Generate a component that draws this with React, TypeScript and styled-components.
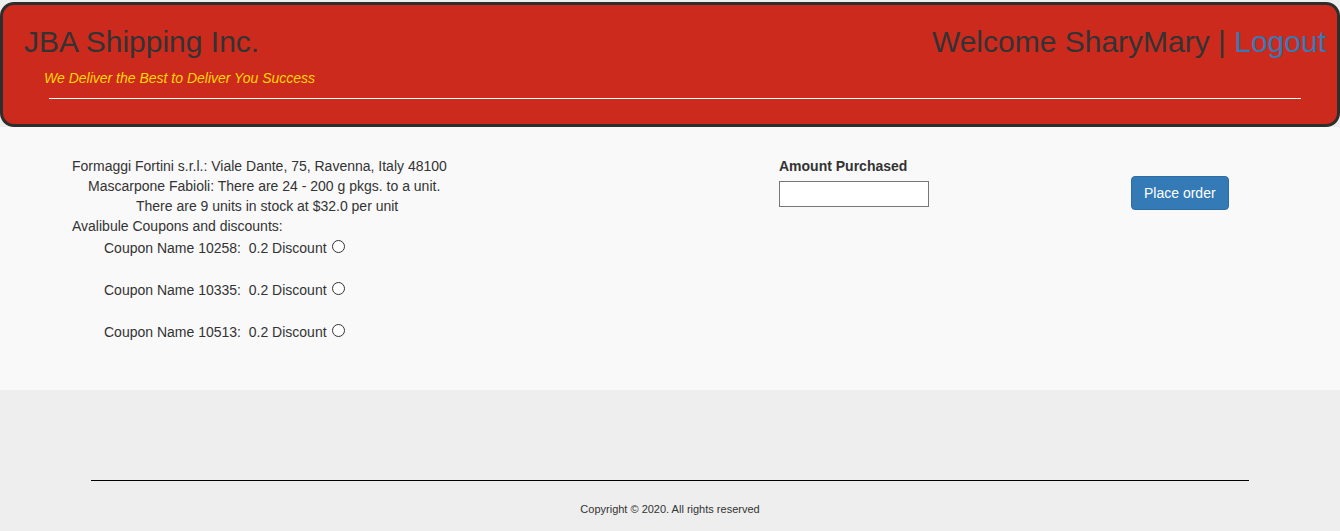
import type { FC } from "react";
import styled, { createGlobalStyle } from "styled-components";

const GlobalStyle = createGlobalStyle`
  html, body {
    margin: 0;
    padding: 0;
    background-color: #eeeeee;
  }
  body {
    font-family: "Liberation Sans", Arial, sans-serif;
    font-size: 14px;
    line-height: 20px;
    color: #333333;
  }
`;

const Header = styled.header`
  margin-top: 2px;
  background-color: #cd2a1e;
  border: 3px solid #2e2e2e;
  border-radius: 14px;
  padding: 20px 11px 25px 21px;
`;

const TopRow = styled.div`
  display: flex;
  justify-content: space-between;
  align-items: baseline;
  font-size: 30px;
  line-height: 33px;
  color: #333333;
`;

const Brand = styled.div``;

const Welcome = styled.div`
  a {
    color: #337ab7;
    text-decoration: none;
  }
`;

const Tagline = styled.div`
  margin: 10px 0 0 20px;
  font-size: 14px;
  line-height: 20px;
  font-style: italic;
  color: #ffd700;
`;

const Rule = styled.hr`
  margin: 10px 25px 0 25px;
  border: 0;
  border-top: 1px solid #ffffff;
  height: 0;
`;

const Main = styled.main`
  background-color: #f9f9f9;
  display: flex;
  padding: 29px 0 48px 0;
  height: 186px;
`;

const Details = styled.div`
  width: 707px;
  padding-left: 72px;
`;

const Line = styled.div<{ $indent?: number }>`
  padding-left: ${({ $indent }) => $indent ?? 0}px;
  white-space: pre;
`;

const Coupons = styled.div`
  display: flex;
  flex-direction: column;
  gap: 22px;
  margin-top: 2px;
  padding-left: 32px;
`;

const CouponRow = styled.label`
  display: flex;
  align-items: center;
  white-space: pre;
`;

const Radio = styled.input.attrs({ type: "radio" })`
  appearance: none;
  width: 13px;
  height: 13px;
  margin: -3px 0 0 5px;
  border: 1px solid #333333;
  border-radius: 50%;
  background: #ffffff;
  box-sizing: border-box;
`;

const AmountGroup = styled.div`
  width: 352px;
  display: flex;
  flex-direction: column;
`;

const Label = styled.label`
  font-weight: bold;
  margin-bottom: 5px;
`;

const AmountInput = styled.input`
  width: 150px;
  height: 26px;
  box-sizing: border-box;
  border: 1px solid #767676;
  background: #ffffff;
  padding: 1px 2px;
`;

const ButtonCell = styled.div`
  padding-top: 20px;
`;

const OrderButton = styled.button`
  background-color: #337ab7;
  border: 1px solid #2e6da4;
  border-radius: 4px;
  color: #ffffff;
  font-family: "Liberation Sans", Arial, sans-serif;
  font-size: 14px;
  line-height: 20px;
  padding: 6px 12px;
  cursor: pointer;
`;

const Footer = styled.footer`
  background-color: #eeeeee;
  padding: 90px 91px 14px 91px;
`;

const FooterRule = styled.hr`
  margin: 0;
  border: 0;
  border-top: 1px solid #000000;
  height: 0;
`;

const Copyright = styled.p`
  margin: 21px 0 0 0;
  text-align: center;
  font-size: 11px;
  line-height: 15px;
  color: #333333;
`;

const coupons = [
  { name: "10258", discount: "0.2" },
  { name: "10335", discount: "0.2" },
  { name: "10513", discount: "0.2" },
];

const App: FC = () => {
  return (
    <>
      <GlobalStyle />
      <Header>
        <TopRow>
          <Brand>JBA Shipping Inc.</Brand>
          <Welcome>
            Welcome SharyMary | <a href="#">Logout</a>
          </Welcome>
        </TopRow>
        <Tagline>We Deliver the Best to Deliver You Success</Tagline>
        <Rule />
      </Header>
      <Main>
        <Details>
          <Line>Formaggi Fortini s.r.l.: Viale Dante, 75, Ravenna, Italy 48100</Line>
          <Line $indent={16}>Mascarpone Fabioli: There are 24 - 200 g pkgs. to a unit.</Line>
          <Line $indent={64}>There are 9 units in stock at $32.0 per unit</Line>
          <Line>Avalibule Coupons and discounts:</Line>
          <Coupons>
            {coupons.map((c) => (
              <CouponRow key={c.name}>
                {`Coupon Name ${c.name}:  ${c.discount} Discount`}
                <Radio name="coupon" />
              </CouponRow>
            ))}
          </Coupons>
        </Details>
        <AmountGroup>
          <Label htmlFor="amount">Amount Purchased</Label>
          <AmountInput id="amount" type="text" />
        </AmountGroup>
        <ButtonCell>
          <OrderButton>Place order</OrderButton>
        </ButtonCell>
      </Main>
      <Footer>
        <FooterRule />
        <Copyright>Copyright © 2020. All rights reserved</Copyright>
      </Footer>
    </>
  );
};

export default App;
